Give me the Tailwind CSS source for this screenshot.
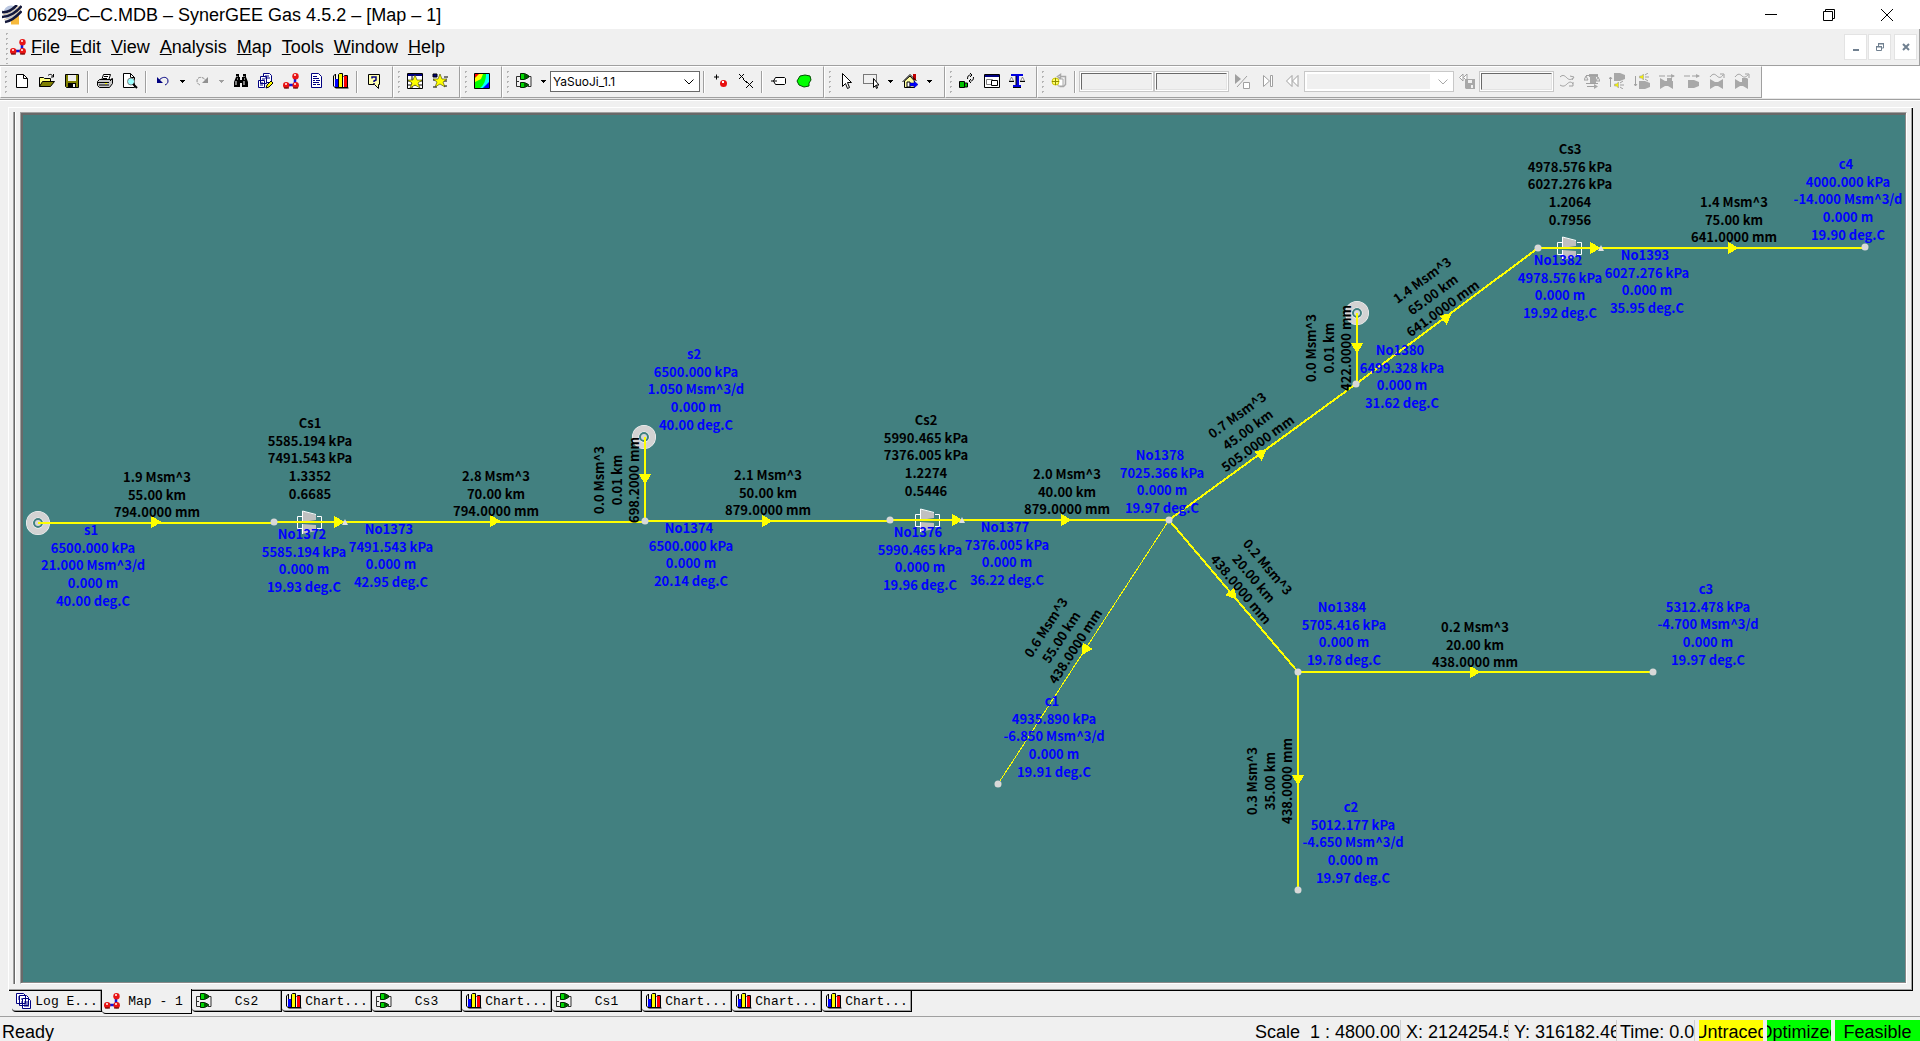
<!DOCTYPE html>
<html lang="en">
<head>
<meta charset="utf-8">
<title>0629-C-C.MDB – SynerGEE Gas 4.5.2 – [Map – 1]</title>
<script src="https://cdn.jsdelivr.net/npm/@tailwindcss/browser@4"></script>
</head>
<body class="flex h-screen flex-col overflow-hidden bg-[#f0f0f0] font-['Liberation_Sans',sans-serif] text-[18px] leading-6 text-black">

<!-- Icon library -->
<svg class="hidden" aria-hidden="true">
  <symbol id="i-app" viewBox="0 0 20 20">
    <circle cx="9" cy="8" r="7.500" fill="#b9c6e0"/>
    <path d="M9 19.500V14l8-4v9.500z" fill="#f6b93c"/>
    <path d="M0 7C5 8 11 4 15 0M0 12C7 12 15 7 19.500 1M3 17C9 16 15 11 19.500 6" stroke="#14183a" stroke-width="2.600" fill="none"/>
    <path d="M1 9.500C7 9 12 6 17 1M2 14.500C8 14 14 9 19 4" stroke="#e8c890" stroke-width=".8" fill="none"/>
  </symbol>
  <symbol id="i-mol" viewBox="0 0 16 16">
    <path d="M3 12H12V4" stroke="#1414d8" stroke-width="2.500" fill="none"/>
    <circle cx="3.200" cy="12.300" r="3.200" fill="#e81414"/><circle cx="12.700" cy="12.300" r="3.200" fill="#e81414"/><circle cx="12.500" cy="3.300" r="3.200" fill="#e81414"/>
    <path d="M2 10h2v2H2zM11 10h2v2h-2zM11 1h2v2h-2z" fill="#ffc0c0"/>
    <path d="M1 15h5M10 15h5" stroke="#500"/>
  </symbol>
  <symbol id="i-new" viewBox="0 0 16 16"><path d="M2.500 1.500h7l4 4v9h-11z" fill="#fff" stroke="#000"/><path d="M9.500 1.500v4h4" fill="none" stroke="#000"/></symbol>
  <symbol id="i-open" viewBox="0 0 16 16"><path d="M.5 13.500v-9h4l1 1h6v3" fill="#ffff80" stroke="#000"/><path d="M.5 13.500l3-5h12l-4 5z" fill="#808000" stroke="#000"/><path d="M9 2.500c2-2 4-1 5 1M14.500 1v3H12" fill="none" stroke="#000"/></symbol>
  <symbol id="i-save" viewBox="0 0 16 16"><path d="M1.500 1.500h13v13h-12l-1-1z" fill="#808000" stroke="#000"/><path d="M4 2h8v6H4z" fill="#f0f0f0"/><path d="M4 10h8v4H4z" fill="#000"/><path d="M9 11h2v3H9z" fill="#f0f0f0"/></symbol>
  <symbol id="i-print" viewBox="0 0 16 16"><path d="M4.500 7.500l2-6h7l-2 6z" fill="#fff" stroke="#000"/><path d="M.5 8.500l2-2h11l2-1v5l-3 4h-10l-2-2z" fill="#c8c8c8" stroke="#000"/><path d="M1 9.500h11M2 12h10M7 3.500h4M6 5.500h4M13 8l2-2" stroke="#000"/><path d="M8 10h2v1H8z" fill="#ff0"/></symbol>
  <symbol id="i-preview" viewBox="0 0 16 16"><path d="M1.500.5h7l4 4v10h-11z" fill="#fff" stroke="#000"/><path d="M8.500.5v4h4" fill="none" stroke="#000"/><circle cx="9" cy="8.500" r="3.500" fill="#9ff" stroke="#808080"/><path d="M11 11l4 4" stroke="#000" stroke-width="2"/></symbol>
  <symbol id="i-undo" viewBox="0 0 16 16"><path d="M3 9C6 3 13 3 13 8c0 2-1 3-3 4" fill="none" stroke="#000080"/><path d="M2 4v6h6z" fill="#000080"/></symbol>
  <symbol id="i-redo" viewBox="0 0 16 16"><path d="M13 9C10 3 3 3 3 8c0 2 1 3 3 4" fill="none" stroke="#909090" stroke-dasharray="3 1"/><path d="M14 4v6H8z" fill="#909090"/></symbol>
  <symbol id="i-dd" viewBox="0 0 5 3"><path d="M0 0h5v1H4v1H3v1H2V2H1V1H0z" fill="currentColor"/></symbol>
  <symbol id="i-find" viewBox="0 0 16 16"><path d="M3 1h3v3h1v3h2V4h1V1h3v3l2 5v5H9v-4H7v4H1V9l2-5z" fill="#000"/><path d="M4 3v1M11 3v1M3 8v4M11 8v4M4 6h1M11 6h1" stroke="#fff"/></symbol>
  <symbol id="i-copy" viewBox="0 0 16 16"><path d="M5.500.5h6l2 2v7h-8z" fill="#fff" stroke="#000080"/><path d="M2.500 3.500h6v7h-6zM.5 7.500h6v7h-6z" fill="#fff" stroke="#000080"/><path d="M7 3h4M7 5h5M4 6h3M2 10h3M2 12h3" stroke="#000080"/><path d="M9 12l4-4 2 2-4 4-3 1z" fill="#ff0" stroke="#000"/></symbol>
  <symbol id="i-doc" viewBox="0 0 16 16"><path d="M3.500.5h7l3 3v11h-10z" fill="#fff" stroke="#000080"/><path d="M5 3.500h4M5 5.500h6M5 7.500h2M8 7.500h4M5 9.500h6M5 11.500h3M9 11.500h3" stroke="#000080"/></symbol>
  <symbol id="i-chart" viewBox="0 0 16 16"><path d="M.5 3v10l2 2h13M.5 3l2-2v5" fill="none" stroke="#000"/><path d="M2 6h4v8H2z" fill="#00f"/><path d="M6 1h4v13H6z" fill="#ff0"/><path d="M11 3h3v11h-3z" fill="#f00"/><path d="M5.500 14V1.500l1-1h3v13.500M10.500 3.500l1-1h3V14M2 14.500h13" fill="none" stroke="#000"/></symbol>
  <symbol id="i-help" viewBox="0 0 16 16"><path d="M2.500 1.500h11v10h-1v4l-4-4h-6z" fill="#ffffb0" stroke="#000"/><path d="M6 5.500V4h4v3L8 8v1M8 10v1" fill="none" stroke="#000080" stroke-width="1.500"/></symbol>
  <symbol id="i-star1" viewBox="0 0 16 16"><path d="M.5.5h15v15H.5z" fill="#fff" stroke="#000"/><path d="M1 1h14v2H1z" fill="#000080"/><path d="M.5 8h15M.5 12h15M5 3v12" stroke="#000"/><path d="M8 2l2 5h5l-4 3 2 5-5-3-5 3 2-5-4-3h5z" fill="#ff0" stroke="#404000" stroke-width=".6"/></symbol>
  <symbol id="i-star2" viewBox="0 0 16 16"><path d="M1 1h4v3H1zM1 7h3M12 4h4M12 8h3M1 14h4M12 13h3" fill="#000080" stroke="#000"/><path d="M8 1l2 5h5l-4 3 2 5-5-3-5 3 2-5-4-3h5z" fill="#ff0" stroke="#404000" stroke-width=".6"/></symbol>
  <symbol id="i-contour" viewBox="0 0 16 16"><path d="M.5.5h15v15H.5z" fill="#0f0"/><path d="M1 1h5L1 5z" fill="#f00"/><path d="M5 1h4L7 6 1 9V5z" fill="#ff0"/><path d="M12 1h3v9l-6 5H6c4-3 6-8 6-14z" fill="#0ff"/><path d="M15 9v6H9z" fill="#00f"/><path d="M.5.5h15v15H.5z" fill="none" stroke="#000"/></symbol>
  <symbol id="i-comp" viewBox="0 0 16 16"><path d="M4 3.500H.5v10H4M12 3.500h3v10h-3M0 8.500h3" fill="none" stroke="#303030"/><path d="M4.500.5h4l4 2v2l-4 2h-4zM4.500 9.500h4l4 2v1l-4 2h-4z" fill="#006000" stroke="#002800"/><path d="M5 1h3v5H5zM5 10h3v4H5z" fill="#00d800"/></symbol>
  <symbol id="i-plusdot" viewBox="0 0 16 16"><path d="M1 4h5M3.500 1.500v5" stroke="#000"/><circle cx="10.500" cy="10.500" r="3.500" fill="#e81010"/><path d="M9 8h2v2H9z" fill="#fff"/></symbol>
  <symbol id="i-xx" viewBox="0 0 16 16"><path d="M1 1l5 5M6 1L1 6M5 6l4 4M8 8l7 7M15 8l-7 7" stroke="#000"/></symbol>
  <symbol id="i-tag" viewBox="0 0 16 16"><path d="M4.500 4.500h9l1 1v5l-1 1h-9l-2-3.500z" fill="#fff" stroke="#000"/><path d="M0 8h6" stroke="#000"/></symbol>
  <symbol id="i-blob" viewBox="0 0 16 16"><path d="M4 3l5-1 5 1 1 4-2 3v3l-5 1-5-2-2-4z" fill="#0f0" stroke="#005000"/></symbol>
  <symbol id="i-ptr" viewBox="0 0 16 16"><path d="M4.500.5v13l3-3 2 5 2-1-2-5h4z" fill="#fff" stroke="#000"/></symbol>
  <symbol id="i-sel" viewBox="0 0 16 16"><path d="M.5 1.500h13v9H.5z" fill="none" stroke="#000" stroke-dasharray="1 1"/><path d="M10.500 5.500v9l2-2 1 3 1-.5-1-3h2.500z" fill="#fff" stroke="#000"/></symbol>
  <symbol id="i-home" viewBox="0 0 16 16"><path d="M11 1h3v6h-3z" fill="#c00000"/><path d="M2.500 8v6.500h10V8L8 3z" fill="#ffffa0" stroke="#000"/><path d="M.5 9L8 1.500 14.500 8" fill="none" stroke="#000"/><path d="M5 9h3v5H5z" fill="#fff" stroke="#000"/><path d="M8 10h4V8l4 3.500-4 3.500v-2H8z" fill="#00f" stroke="#000080" stroke-width=".5"/></symbol>
  <symbol id="i-refresh" viewBox="0 0 16 16"><path d="M.5 8.500h5v6h-5zM5.500 10h3v4h-3z" fill="#00c000" stroke="#000"/><path d="M8.500 6c0-3 1-4 3-4M11 0l2 2-2 2M14.500 4c0 3-1 4-3 4M12 10l-2-2 2-2" fill="none" stroke="#000"/></symbol>
  <symbol id="i-win" viewBox="0 0 16 16"><path d="M.5 1.500h15v13H.5z" fill="#fff" stroke="#000"/><path d="M1 2h14v2H1z" fill="#000080"/><path d="M2.500 6.500h6v5h-6z" fill="none" stroke="#808080"/><path d="M7.500 7.500h6v5h-6z" fill="#fff" stroke="#000"/></symbol>
  <symbol id="i-scale" viewBox="0 0 16 16"><path d="M2 1h12v2h-4v9h2v2H4v-2h3V3H2z" fill="#0000e0"/><path d="M7 3v9M4 14.500h8" stroke="#000"/><path d="M.5 8l2-4 2 4zM11.500 8l2-4 2 4z" fill="#fff" stroke="#707070" stroke-width=".8"/><path d="M0 8.500h5M11 8.500h5" stroke="#000"/></symbol>
  <symbol id="i-cycle" viewBox="0 0 16 16"><path d="M6.500 3.500l3-2v4zM9 3.500h5.500v8l-2 2h-4" fill="none" stroke="#a8a8a8" stroke-width="1.500"/><path d="M7 6h5v7H7z" fill="#fff" stroke="#a8a8a8"/><circle cx="4.500" cy="8.500" r="3.500" fill="#ffff70" stroke="#d0c800"/><path d="M4.500 5v7M1 8.500h7" stroke="#909000"/></symbol>
  <symbol id="i-play" viewBox="0 0 16 16"><path d="M1 1l6 5-6 5z" fill="#a0a0a0"/><path d="M3 14L13 3" stroke="#a0a0a0"/><path d="M9.500 9.500h6v6h-6z" fill="#fff" stroke="#a0a0a0"/></symbol>
  <symbol id="i-next" viewBox="0 0 16 16"><path d="M4.500 2.500l6 5.500-6 5.500zM11.500 2.500h2v11h-2z" fill="#fff" stroke="#a0a0a0"/></symbol>
  <symbol id="i-rew" viewBox="0 0 16 16"><path d="M8 2.500v11L2.500 8zM14 2.500v11L8.500 8z" fill="#fff" stroke="#a0a0a0"/></symbol>
  <symbol id="i-rewsave" viewBox="0 0 16 16"><path d="M4 1v7L.5 4.500zM8 1v7L4.500 4.500z" fill="#fff" stroke="#a0a0a0"/><path d="M6 6h10v10H7l-1-1z" fill="#a8a8a8"/><path d="M9 7h4v3H9zM12 12h2v3h-2z" fill="#f0f0f0"/></symbol>
  <symbol id="i-shuf" viewBox="0 0 16 16"><path d="M1 4c3-3 5-1 7 1s4 2 6 0M1 12c3 2 5 1 7-1s4-3 6 0M11 3l4 1-2 3M14 9v4h-4" fill="none" stroke="#a0a0a0"/></symbol>
  <symbol id="i-g1" viewBox="0 0 16 16"><path d="M5 1h9v3h-2v6H6V4H5z" fill="#a8a8a8"/><path d="M0 7l2-4 2 4zM12 8l2-4 2 4zM2 2.500h12M3 13.500h10M2 10.500h12" fill="none" stroke="#a0a0a0"/><path d="M10 11l4 2.500-4 2.500z" fill="#a8a8a8"/></symbol>
  <symbol id="i-g2" viewBox="0 0 16 16"><path d="M5 0h6l5 2v4l-5 2H5z" fill="#a8a8a8"/><path d="M1.500 14V4M0 6l1.500-2L3 6" fill="none" stroke="#a0a0a0"/><path d="M5.500 11h2l2-2v6l-2-2h-2z" fill="#f4f000" stroke="#a0a0a0" stroke-width=".6"/><path d="M11 10l3-2M11 12h4M11 14l3 2" stroke="#a0a0a0"/></symbol>
  <symbol id="i-g3" viewBox="0 0 16 16"><path d="M5 8h6l5 2v4l-5 2H5z" fill="#a8a8a8"/><path d="M1.500 3v10M0 11l1.500 2L3 11" fill="none" stroke="#a0a0a0"/><path d="M5.500 3h2l2-2v6l-2-2h-2z" fill="#f4f000" stroke="#a0a0a0" stroke-width=".6"/><path d="M11 2l3-2M11 4h4M11 6l3 2" stroke="#a0a0a0"/></symbol>
  <symbol id="i-g4" viewBox="0 0 16 16"><path d="M1 5l5 3h2V5h5v3h1v8l-5-3H6l-5 3z" fill="#a8a8a8"/><path d="M0 3h6M8 3h7" stroke="#a0a0a0"/><path d="M12 1l4 2-4 2z" fill="#a8a8a8"/></symbol>
  <symbol id="i-g5" viewBox="0 0 16 16"><path d="M4 7h6l5 2v4l-5 2H4z" fill="#a8a8a8"/><path d="M0 3h6M8 3h7" stroke="#a0a0a0"/><path d="M12 1l4 2-4 2z" fill="#a8a8a8"/></symbol>
  <symbol id="i-g6" viewBox="0 0 16 16"><path d="M1 6l5 3h3l5-3v10l-5-3H6l-5 3z" fill="#a8a8a8"/><path d="M1 4c3-4 5-3 7-1s4 2 6-1M11 1h4v4" fill="none" stroke="#a0a0a0"/></symbol>
  <symbol id="i-g7" viewBox="0 0 16 16"><path d="M1 6l5 3h2V5h5l1 1v10l-5-3H6l-5 3z" fill="#a8a8a8"/><path d="M1 4c3-4 5-3 7-1s4 1 6-1M11 1h4v4" fill="none" stroke="#a0a0a0"/></symbol>
  <symbol id="i-log" viewBox="0 0 16 16"><path d="M.5.5h7l2 2v8h-9zM3.500 2.500h7l2 2v8h-9zM6.500 5.500h6l2 2v8h-8z" fill="#fff" stroke="#000080"/><path d="M2 4h1M2 6h1M5 6h1M5 9h1M8 9h5M8 11h5M8 13h5" stroke="#000080"/></symbol>
  <symbol id="i-chev" viewBox="0 0 10 6"><path d="M.5.5L5 5 9.500.5" fill="none" stroke="currentColor"/></symbol>
</svg>

<!-- Title bar -->
<header class="flex h-[29px] shrink-0 items-center bg-white pl-[2px] pr-1">
  <svg class="size-5"><use href="#i-app"/></svg>
  <h1 class="ml-[5px] flex-1 whitespace-nowrap">0629–C–C.MDB – SynerGEE Gas 4.5.2 – [Map – 1]</h1>
  <button class="flex h-7 w-[58px] items-center justify-center" aria-label="Minimize"><svg class="h-3 w-3" viewBox="0 0 12 12"><path d="M0 5.500h12" stroke="#000"/></svg></button>
  <button class="flex h-7 w-[58px] items-center justify-center" aria-label="Restore"><svg class="h-3 w-3" viewBox="0 0 12 12"><path d="M.5 2.500h9v9h-9zM2.500 2V.5h9v9H10" fill="none" stroke="#000"/></svg></button>
  <button class="flex h-7 w-[58px] items-center justify-center" aria-label="Close"><svg class="h-3 w-3" viewBox="0 0 12 12"><path d="M0 0l12 12M12 0L0 12" stroke="#000"/></svg></button>
</header>

<!-- Menu bar -->
<nav class="flex h-[37px] shrink-0 items-center border-r border-b border-[#a0a0a0] pl-1 pr-[2px]">
  <span class="h-[33px] w-[6px] bg-[radial-gradient(#b4b4b4_1px,transparent_1px)] bg-[length:5px_5px]"></span>
  <svg class="h-4 w-4"><use href="#i-mol"/></svg>
  <div class="ml-[5px] flex flex-1 gap-[10px]">
    <a href="#"><u>F</u>ile</a>
    <a href="#"><u>E</u>dit</a>
    <a href="#"><u>V</u>iew</a>
    <a href="#"><u>A</u>nalysis</a>
    <a href="#"><u>M</u>ap</a>
    <a href="#"><u>T</u>ools</a>
    <a href="#"><u>W</u>indow</a>
    <a href="#"><u>H</u>elp</a>
  </div>
  <button class="flex h-[26px] w-[23px] items-center justify-center border border-[#e3e3e3] bg-white" aria-label="Minimize map"><svg class="h-2 w-2" viewBox="0 0 8 8"><path d="M1 7h6" stroke="#708090" stroke-width="2"/></svg></button>
  <button class="ml-px flex h-[26px] w-[23px] items-center justify-center border border-[#e3e3e3] bg-white" aria-label="Restore map"><svg class="h-2 w-2" viewBox="0 0 8 8"><path d="M.5 4h5v3.500h-5zM2.500 3V1h5v4H6M2 .5h6M0 3.500h6" fill="none" stroke="#708090"/></svg></button>
  <button class="ml-[3px] flex h-[26px] w-[23px] items-center justify-center border border-[#e3e3e3] bg-white" aria-label="Close map"><svg class="h-2 w-2" viewBox="0 0 8 8"><path d="M1 1l6 6M7 1L1 7" stroke="#708090" stroke-width="2"/></svg></button>
</nav>

<!-- Tool bars -->
<div class="shrink-0 border-b border-white bg-white">
  <div id="bars" class="flex h-8 text-black"></div>
  <div class="h-[2px] border-b border-[#a0a0a0] bg-[#e8e8e8]"></div>
</div>

<!-- Work area -->
<main class="mt-[6px] mr-[7px] ml-2 flex min-h-0 flex-1 flex-col border-t border-l border-white">
  <div class="flex min-h-0 flex-1 border-r border-b border-black">
    <div class="flex min-w-0 flex-1 border-r border-b border-[#a0a0a0] pt-1 pr-1 pb-[5px] pl-1">
      <div class="w-[3px] border-r border-l border-r-white border-l-[#a0a0a0] bg-[#696969]"></div>
      <div class="ml-1 flex min-w-0 flex-1 border border-t-[#a0a0a0] border-r-white border-b-white border-l-[#a0a0a0]">
        <div class="min-w-0 flex-1 overflow-hidden border-t-2 border-r border-b border-l-2 border-t-[#696969] border-r-[#8a8a8a] border-b-[#8a8a8a] border-l-[#696969] bg-[#428080]">
          <svg id="map" class="block h-full w-full" viewBox="23 115 1882 867" role="img" aria-label="Gas network map"></svg>
        </div>
      </div>
    </div>
  </div>
</main>

<!-- Window tabs -->
<div id="tabs" class="flex h-[25px] shrink-0 items-start pl-3 font-['Liberation_Mono',monospace] text-[13px] leading-[21px]"></div>

<!-- Status bar -->
<footer class="flex h-[25px] shrink-0 border-t border-[#a0a0a0] pt-[3px] whitespace-pre">
  <div class="flex-1 pl-[2px]">Ready</div>
  <div class="w-[146px] overflow-hidden border-r border-[#d0d0d0]">Scale  1 : 4800.000</div>
  <div class="w-[108px] overflow-hidden border-r border-[#d0d0d0] pl-[5px]">X: 2124254.56</div>
  <div class="w-[108px] overflow-hidden border-r border-[#d0d0d0] pl-[5px]">Y: 316182.469</div>
  <div class="w-[78px] overflow-hidden border-r border-[#d0d0d0] pl-[3px]">Time: 0.00</div>
  <div class="ml-1 flex w-16 justify-center overflow-hidden bg-[#ffff00]">Untraced</div>
  <div class="ml-1 flex w-16 justify-center overflow-hidden bg-[#00ff00]">Optimized</div>
  <div class="ml-1 flex w-[85px] justify-center overflow-hidden bg-[#00ff00]">Feasible</div>
</footer>

<script>
// ---- Tool bars: one entry per band ----
const icon = (id, label, off) => `<button class="flex w-[25px] items-center justify-center pb-[2px]" aria-label="${label}" ${off ? 'disabled' : ''}><svg class="size-4"><use href="#i-${id}"/></svg></button>`;
const drop = off => `<button class="flex w-[14px] items-center justify-center pb-[2px] ${off ? 'text-[#a0a0a0]' : 'text-black'}" aria-label="More"><svg class="h-[3px] w-[5px]"><use href="#i-dd"/></svg></button>`;
const sep = '<span class="mx-[3px] my-1 w-[2px] border-r border-l border-l-[#a0a0a0] border-r-white"></span>';
const box = n => `<span class="mt-1 mb-[5px] flex w-[75px] border border-[#c8c8c8] bg-white p-px"><input disabled aria-label="${n}" class="w-full border border-t-[#696969] border-r-[#e3e3e3] border-b-[#e3e3e3] border-l-[#696969] bg-[#f0f0f0]"></span>`;
const combo = (v, off) => `<span class="relative mt-1 mb-[5px] flex w-[150px] border ${off ? 'border-[#c8c8c8] text-[#a8a8a8]' : 'border-[#696969] text-black'} bg-white p-[2px]"><select aria-label="Selection" ${off ? 'disabled' : ''} class="w-full appearance-none font-['Inter',sans-serif] text-[12px] leading-4 ${off ? 'mr-[21px] bg-[#f0f0f0]' : 'bg-white'}"><option>${v}</option></select><svg class="pointer-events-none absolute top-[7px] right-[5px] h-[6px] w-[10px]"><use href="#i-chev"/></svg></span>`;
const bands = [
  ['w-[393px]', icon('new','New') + icon('open','Open') + icon('save','Save') + sep + icon('print','Print') + icon('preview','Preview') + sep + icon('undo','Undo') + drop() + icon('redo','Redo',1) + drop(1) + icon('find','Find') + icon('copy','Copy report') + icon('mol','Map') + icon('doc','Report') + icon('chart','Chart') + sep + icon('help','Help')],
  ['w-[67px]', icon('star1','New table') + icon('star2','New theme')],
  ['w-[42px]', icon('contour','Contour')],
  ['w-[322px]', icon('comp','Facility') + drop() + combo('YaSuoJi_1.1') + sep + icon('plusdot','Add node') + icon('xx','Break') + sep + icon('tag','Tag') + icon('blob','Region')],
  ['w-[121px]', icon('ptr','Pointer') + icon('sel','Select') + drop() + icon('home','Home') + drop()],
  ['w-[92px]', icon('refresh','Refresh') + icon('win','Windows') + icon('scale','Balance')],
  ['w-[725px]', icon('cycle','Cycle',1) + sep + box('Start') + box('End') + icon('play','Run',1) + icon('next','Next',1) + icon('rew','Rewind',1) + combo('',1) + icon('rewsave','Save step',1) + box('Step') + icon('shuf','Flow',1) + ['g1','g2','g3','g4','g5','g6','g7'].map(g => icon(g,'Tool',1)).join('')],
];
document.getElementById('bars').innerHTML = bands.map(([w, html]) =>
  `<div class="flex shrink-0 border border-t-white border-r-[#a0a0a0] border-b-[#a0a0a0] border-l-white bg-[#f0f0f0] ${w}"><span class="my-[2px] ml-[2px] w-[6px] bg-[radial-gradient(#b4b4b4_1px,transparent_1px)] bg-[length:5px_5px]"></span>${html}</div>`).join('');

// ---- Window tabs ----
const tabs = [['log','Log E...'],['mol','Map - 1'],['comp','Cs2'],['chart','Chart...'],['comp','Cs3'],['chart','Chart...'],['comp','Cs1'],['chart','Chart...'],['chart','Chart...'],['chart','Chart...']];
document.getElementById('tabs').innerHTML = tabs.map(([id, t]) => {
  const on = id === 'mol';
  return `<button class="flex w-[90px] items-center rounded-bl border-r border-b ${on ? 'z-10 -mt-[2px] h-[25px] border-black bg-[#f0f0f0] pl-[2px]' : 'h-[21px] border-black pl-1 shadow-[inset_-1px_-1px_#a0a0a0]'}"><svg class="size-4 shrink-0"><use href="#i-${id}"/></svg><span class="flex-1 text-center whitespace-nowrap">${t}</span></button>`;
}).join('');

// ---- Map ----
const rows = [0, 18, 35, 53, 71];
const text = (x, y, lines, fill, rot, name) => `<g transform="translate(${x} ${y}) rotate(${rot || 0})" fill="${fill}">` +
  lines.split('|').map((s, i) => `<text x="${name && !i ? -2 : 0}" y="${rows[i]}">${s}</text>`).join('') + '</g>';
const pipe = (a, b, c, d, w) => `<path d="M${a} ${b}L${c} ${d}" stroke="#ff0" stroke-width="${w || 2}"/>`;
const arrow = (x, y, r) => `<path transform="translate(${x} ${y}) rotate(${r || 0})" d="M-5 -6L6 0L-5 6z" fill="#ff0"/>`;
const node = (x, y) => `<circle cx="${x}" cy="${y}" r="3.500" fill="#d8d8d8"/>`;
const tri = (x, y) => `<path d="M${x - 3} ${y + 3}l3 -6l3 6z" fill="#e0e0e0"/>`;
const source = (x, y) => `<circle cx="${x}" cy="${y}" r="8.500" fill="none" stroke="#fff" stroke-width="7"/><circle cx="${x}" cy="${y}" r="8.500" fill="none" stroke="#d3d3d3" stroke-width="6"/><circle cx="${x}" cy="${y}" r="3" fill="#d8d8d8"/>`;
const comp = (x, y) => `<g transform="translate(${x} ${y})"><path d="M-8 -11L6 -7V-2L-8 0zM-8 2L6 3V9L-8 12z" fill="#c0c0c0"/><path d="M-7.500 0V-11L6 -7.500M-7.500 2V12M-8 -5.500H-12.500V6.500H-8M7 -5.500H11.500V6.500H7" fill="none" stroke="#fff"/></g>`;
const pipes = [[38,523,274,523],[274,522,645,522],[645,437,645,521],[645,521,890,521],[890,520,1169,520],[1169,520,1356,384],[1357,313,1357,384],[1356,384,1538,248],[1538,248,1865,248],[1169,520,998,784,1],[1169,520,1298,672],[1298,672,1653,672],[1298,672,1298,890]];
const arrows = [[156,522],[339,522],[495,521],[645,479,90],[767,521],[957,520],[1066,520],[1262,453,-36],[1357,348,90],[1447,317,-36],[1595,248],[1733,248],[1085,650,123],[1233,595,50],[1475,672],[1298,780,90]];
const nodes = [[274,522],[645,521],[890,520],[1169,520],[1356,384],[1538,248],[1865,247],[998,784],[1298,672],[1653,672],[1298,890]];
const B = '#000', N = '#0000ff';
const labels = [
  [157,482,'1.9 Msm^3|55.00 km|794.0000 mm',B],[496,481,'2.8 Msm^3|70.00 km|794.0000 mm',B],
  [768,480,'2.1 Msm^3|50.00 km|879.0000 mm',B],[1067,479,'2.0 Msm^3|40.00 km|879.0000 mm',B],
  [1734,207,'1.4 Msm^3|75.00 km|641.0000 mm',B],[1475,632,'0.2 Msm^3|20.00 km|438.0000 mm',B],
  [604,480,'0.0 Msm^3|0.01 km|698.2000 mm',B,-90],[1316,348,'0.0 Msm^3|0.01 km|422.0000 mm',B,-90],
  [1257,781,'0.3 Msm^3|35.00 km|438.0000 mm',B,-90],[1240,419,'0.7 Msm^3|45.00 km|505.0000 mm',B,-36],
  [1425,284,'1.4 Msm^3|65.00 km|641.0000 mm',B,-36],[1264,570,'0.2 Msm^3|20.00 km|438.0000 mm',B,50],
  [1050,630,'0.6 Msm^3|55.00 km|438.0000 mm',B,-57],
  [310,428,'Cs1|5585.194 kPa|7491.543 kPa|1.3352|0.6685',B],[926,425,'Cs2|5990.465 kPa|7376.005 kPa|1.2274|0.5446',B],
  [1570,154,'Cs3|4978.576 kPa|6027.276 kPa|1.2064|0.7956',B],
  [93,535,'s1|6500.000 kPa|21.000 Msm^3/d|0.000 m|40.00 deg.C',N,0,1],[304,539,'No1372|5585.194 kPa|0.000 m|19.93 deg.C',N,0,1],
  [391,534,'No1373|7491.543 kPa|0.000 m|42.95 deg.C',N,0,1],[696,359,'s2|6500.000 kPa|1.050 Msm^3/d|0.000 m|40.00 deg.C',N,0,1],
  [691,533,'No1374|6500.000 kPa|0.000 m|20.14 deg.C',N,0,1],[920,537,'No1376|5990.465 kPa|0.000 m|19.96 deg.C',N,0,1],
  [1007,532,'No1377|7376.005 kPa|0.000 m|36.22 deg.C',N,0,1],[1162,460,'No1378|7025.366 kPa|0.000 m|19.97 deg.C',N,0,1],
  [1402,355,'No1380|6499.328 kPa|0.000 m|31.62 deg.C',N,0,1],[1344,612,'No1384|5705.416 kPa|0.000 m|19.78 deg.C',N,0,1],
  [1560,265,'No1382|4978.576 kPa|0.000 m|19.92 deg.C',N,0,1],[1647,260,'No1393|6027.276 kPa|0.000 m|35.95 deg.C',N,0,1],
  [1848,169,'c4|4000.000 kPa|-14.000 Msm^3/d|0.000 m|19.90 deg.C',N,0,1],[1708,594,'c3|5312.478 kPa|-4.700 Msm^3/d|0.000 m|19.97 deg.C',N,0,1],
  [1054,706,'c1|4935.890 kPa|-6.850 Msm^3/d|0.000 m|19.91 deg.C',N,0,1],[1353,812,'c2|5012.177 kPa|-4.650 Msm^3/d|0.000 m|19.97 deg.C',N,0,1],
];
document.getElementById('map').innerHTML =
  [[310,522],[928,520],[1570,248]].map(p => comp(...p)).join('') +
  [[38,523],[644,437],[1357,313]].map(p => source(...p)).join('') +
  '<g shape-rendering="crispEdges">' + pipes.map(p => pipe(...p)).join('') + arrows.map(a => arrow(...a)).join('') + '</g>' +
  nodes.map(n => node(...n)).join('') + [[345,522],[962,520],[1601,248]].map(t => tri(...t)).join('') +
  `<g class="font-['Noto_Sans_CJK_SC',sans-serif] text-[13px] font-bold" text-anchor="middle">` + labels.map(l => text(...l)).join('') + '</g>';
</script>
</body>
</html>
